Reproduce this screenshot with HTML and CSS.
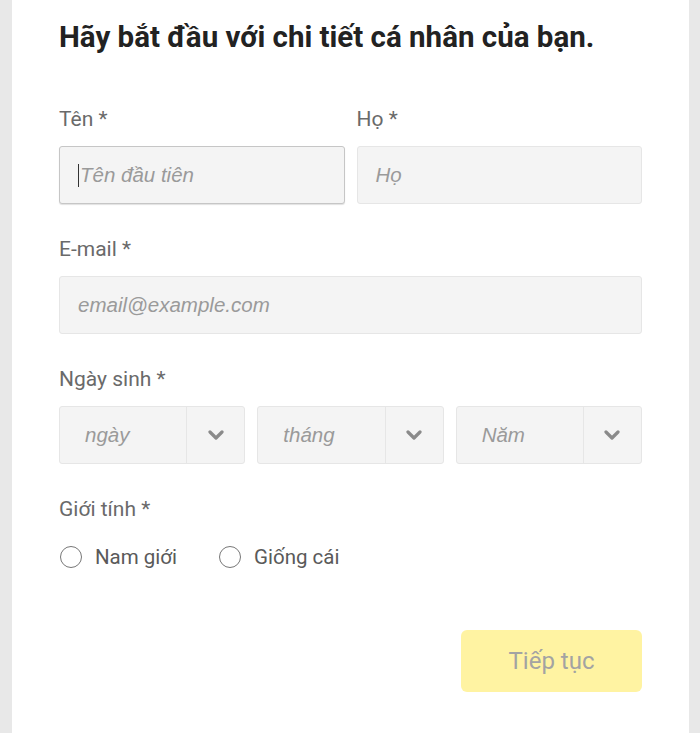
FILE: index.html
```html
<!DOCTYPE html>
<html lang="vi">
<head>
<meta charset="utf-8">
<title>Chi tiết cá nhân</title>
<link rel="stylesheet" href="styles.css">
</head>
<body>
<div class="page">
  <main class="panel">
    <h1 class="title">Hãy bắt đầu với chi tiết cá nhân của bạn.</h1>

    <div class="row two">
      <div class="field">
        <label class="label">Tên *</label>
        <div class="input focus"><span class="caret"></span><span class="ph">Tên đầu tiên</span></div>
      </div>
      <div class="field">
        <label class="label">Họ *</label>
        <div class="input"><span class="ph">Họ</span></div>
      </div>
    </div>

    <div class="field">
      <label class="label">E-mail *</label>
      <div class="input"><span class="ph">email@example.com</span></div>
    </div>

    <div class="field">
      <label class="label">Ngày sinh *</label>
      <div class="row three">
        <div class="select"><span class="ph sel-text">ngày</span><span class="arrow"><svg width="16" height="10" viewBox="0 0 16 10"><polyline points="2,2 8,8 14,2" fill="none" stroke="#8a8a8a" stroke-width="3.2" stroke-linecap="round" stroke-linejoin="round"/></svg></span></div>
        <div class="select"><span class="ph sel-text">tháng</span><span class="arrow"><svg width="16" height="10" viewBox="0 0 16 10"><polyline points="2,2 8,8 14,2" fill="none" stroke="#8a8a8a" stroke-width="3.2" stroke-linecap="round" stroke-linejoin="round"/></svg></span></div>
        <div class="select"><span class="ph sel-text">Năm</span><span class="arrow"><svg width="16" height="10" viewBox="0 0 16 10"><polyline points="2,2 8,8 14,2" fill="none" stroke="#8a8a8a" stroke-width="3.2" stroke-linecap="round" stroke-linejoin="round"/></svg></span></div>
      </div>
    </div>

    <div class="field">
      <label class="label">Giới tính *</label>
      <div class="radios">
        <span class="radio"><span class="circle"></span>Nam giới</span>
        <span class="radio"><span class="circle"></span>Giống cái</span>
      </div>
    </div>

    <div class="actions">
      <button class="btn" type="button">Tiếp tục</button>
    </div>
  </main>
</div>
</body>
</html>
```

FILE: styles.css
```css
* { box-sizing: border-box; }
html, body { margin: 0; padding: 0; height: 100%; }
body {
  background: #e8e8e8;
  font-family: Roboto, "Liberation Sans", Arial, sans-serif;
}
.page {
  display: flex;
  min-height: 733px;
  padding: 0 11px 0 12px;
}
.panel {
  flex: 1;
  background: #fff;
  padding: 19px 47px 0 47px;
}
.title {
  margin: 0 0 52px 0;
  font-size: 29.5px;
  line-height: 36px;
  font-weight: 700;
  color: #222;
}
.row { display: grid; gap: 12px; }
.row.two { grid-template-columns: 1fr 1fr; }
.row.three { grid-template-columns: 1fr 1fr 1fr; }
.field { margin-bottom: 33px; }
.row.two .field { margin-bottom: 0; }
.row.two { margin-bottom: 33px; }
.label {
  display: block;
  font-size: 21px;
  line-height: 24px;
  color: #6a6a6a;
  margin-bottom: 15px;
}
.input {
  height: 58px;
  background: #f4f4f4;
  border: 1px solid #e6e6e6;
  border-radius: 3px;
  display: flex;
  align-items: center;
  padding-left: 18px;
}
.input.focus {
  border-color: #c6c6c6;
  box-shadow: 0 1px 1px rgba(0,0,0,0.12);
}
.caret {
  width: 1px;
  height: 23px;
  background: #333;
  margin-right: 1px;
}
.ph {
  font-family: "Liberation Sans", Arial, sans-serif;
  font-style: italic;
  font-size: 20.5px;
  color: #9a9a9a;
}
.select {
  height: 58px;
  background: #f4f4f4;
  border: 1px solid #e6e6e6;
  border-radius: 3px;
  display: flex;
  align-items: stretch;
}
.sel-text {
  flex: 1;
  display: flex;
  align-items: center;
  padding-left: 25px;
}
.arrow {
  width: 58px;
  border-left: 1px solid #e6e6e6;
  display: flex;
  align-items: center;
  justify-content: center;
}
.arrow svg { display: block; }
.radios {
  display: flex;
  gap: 41px;
  margin-top: 24px;
}
.radio {
  display: flex;
  align-items: center;
  font-size: 20.5px;
  color: #5a5a5a;
}
.circle {
  width: 22px;
  height: 22px;
  border: 1.5px solid #777;
  border-radius: 50%;
  margin-right: 13px;
  margin-left: 1px;
}
.actions {
  display: flex;
  justify-content: flex-end;
  margin-top: 61px;
}
.btn {
  width: 181px;
  height: 62px;
  background: #fff3a2;
  border: none;
  border-radius: 6px;
  font-family: Roboto, "Liberation Sans", Arial, sans-serif;
  font-size: 24px;
  color: #a3a3a3;
  padding: 0;
}
```
